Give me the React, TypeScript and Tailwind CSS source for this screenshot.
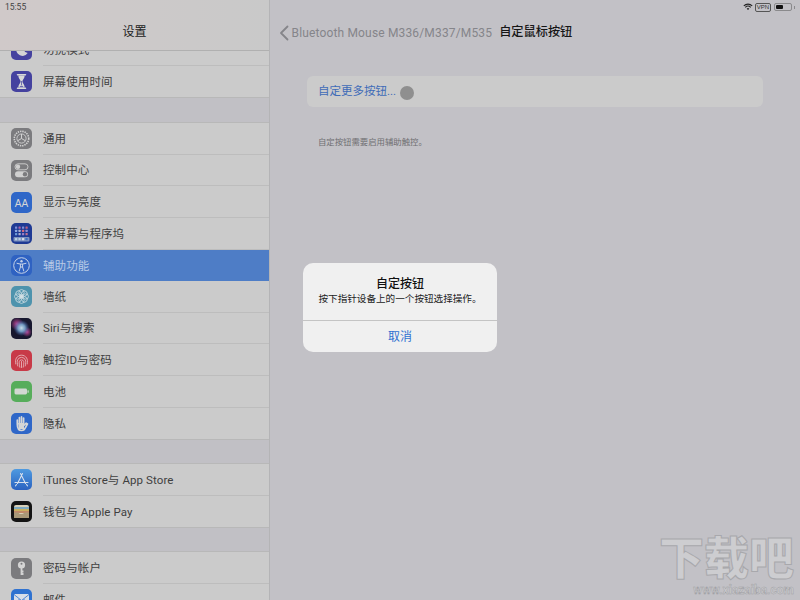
import type { ReactNode } from 'react'

const FONT = "font-['Roboto','Noto_Sans_CJK_SC',sans-serif]"

function Tile({ bg, children }: { bg: string; children: ReactNode }) {
  return (
    <div className={`w-[21px] h-[21px] rounded-[5px] shrink-0 overflow-hidden flex items-center justify-center ${bg}`}>
      {children}
    </div>
  )
}

function Svg({ children }: { children: ReactNode }) {
  return (
    <svg viewBox="0 0 21 21" width="21" height="21" fill="none">
      {children}
    </svg>
  )
}

const gridColors = ['#7f8fd8', '#b060a8', '#7f8fd8', '#c06080', '#8fa8e0', '#a8b0d0', '#d06a80', '#8f8fd0', '#6a9ad8', '#b0b0d0', '#9a80c8', '#c07090']

const icons: Record<string, ReactNode> = {
  moon: (
    <Tile bg="bg-[#45429f]">
      <Svg>
        <path d="M12.500 4.500a6.200 6.200 0 1 0 4.200 9.600 6.500 6.500 0 0 1-4.200-9.600z" fill="#d4d4d4" />
      </Svg>
    </Tile>
  ),
  hourglass: (
    <Tile bg="bg-[#45429f]">
      <Svg>
        <path d="M6.500 3.800h8M6.500 17.200h8" stroke="#d8d8d8" strokeWidth="1.500" strokeLinecap="round" />
        <path d="M7.300 4.500h6.400c0 3-2.300 4.400-2.300 6s2.300 3 2.300 6H7.300c0-3 2.300-4.400 2.300-6s-2.300-3-2.300-6z" fill="#d8d8d8" />
        <path d="M10.500 10v4" stroke="#45429f" strokeWidth="0.700" />
        <path d="M8.600 15.800c.6-1.300 3.200-1.300 3.800 0z" fill="#45429f" />
      </Svg>
    </Tile>
  ),
  gear: (
    <Tile bg="bg-[#7b7b7e]">
      <Svg>
        <circle cx="10.500" cy="10.500" r="7.200" stroke="#d2d2d2" strokeWidth="1.600" strokeDasharray="1.400 0.900" />
        <circle cx="10.500" cy="10.500" r="5.400" stroke="#7b7b7e" strokeWidth="0.600" />
        <circle cx="10.500" cy="10.500" r="4.600" stroke="#d2d2d2" strokeWidth="0.900" />
        <path d="M10.500 10.500V6M10.500 10.500l3.900 2.300M10.500 10.500l-3.900 2.300" stroke="#d2d2d2" strokeWidth="1" />
      </Svg>
    </Tile>
  ),
  toggles: (
    <Tile bg="bg-[#7b7b7e]">
      <Svg>
        <rect x="4" y="3.800" width="13" height="6" rx="3" stroke="#d0d0d0" strokeWidth="0.900" />
        <circle cx="7" cy="6.800" r="2.200" fill="#d0d0d0" />
        <rect x="4" y="11.300" width="13" height="6" rx="3" fill="#d0d0d0" />
        <circle cx="14" cy="14.300" r="2.200" fill="#7b7b7e" />
      </Svg>
    </Tile>
  ),
  display: (
    <Tile bg="bg-[#2f67c8]">
      <span className="text-[#d6d6d6] text-[10px] leading-none font-['Liberation_Sans',sans-serif] pt-[3px]">AA</span>
    </Tile>
  ),
  home: (
    <Tile bg="bg-[#1f3a94]">
      <Svg>
        {[0, 1, 2].map((row) =>
          [0, 1, 2, 3].map((col) => (
            <rect key={`${col}-${row}`} x={4 + col * 3.500} y={3.500 + row * 3.300} width="2.200" height="2.200" rx="0.500" fill={gridColors[col + row * 4]} />
          )),
        )}
        <rect x="2.500" y="14" width="16" height="4.500" rx="1" fill="#7f93c0" />
        {[0, 1, 2, 3].map((col) => (
          <rect key={col} x={4 + col * 3.500} y="15.100" width="2.200" height="2.200" rx="0.500" fill={col === 2 ? '#d8dfe8' : col === 3 ? '#3f6fc0' : '#b8d0e0'} />
        ))}
      </Svg>
    </Tile>
  ),
  access: (
    <Tile bg="bg-[#2f62c2]">
      <Svg>
        <circle cx="10.500" cy="10.500" r="7.800" stroke="#c8d4e8" strokeWidth="1" />
        <circle cx="10.500" cy="6.300" r="1.200" fill="#c8d4e8" />
        <path d="M6 8.300l3.400.8v3L8.200 16M15 8.300l-3.400.8v3l1.200 3.900M9.400 9.100h2.200M9.400 12h2.200" stroke="#c8d4e8" strokeWidth="1" strokeLinecap="round" strokeLinejoin="round" />
      </Svg>
    </Tile>
  ),
  flower: (
    <Tile bg="bg-[#4e93ad]">
      <Svg>
        {[0, 45, 90, 135, 180, 225, 270, 315].map((a) => (
          <circle key={a} cx="10.500" cy="6.300" r="2.700" stroke="#d2dfe4" strokeWidth="0.800" transform={`rotate(${a} 10.500 10.500)`} />
        ))}
        <circle cx="10.500" cy="10.500" r="1.800" fill="#d2dfe4" />
      </Svg>
    </Tile>
  ),
  siri: (
    <div className="w-[21px] h-[21px] rounded-[5px] shrink-0 overflow-hidden bg-[#17172e]">
      <svg viewBox="0 0 21 21" width="21" height="21">
        <defs>
          <radialGradient id="siriGlow" cx="50%" cy="50%" r="50%">
            <stop offset="0%" stopColor="#c8dce8" />
            <stop offset="45%" stopColor="#7aa8d0" stopOpacity="0.900" />
            <stop offset="100%" stopColor="#3a5aa8" stopOpacity="0" />
          </radialGradient>
          <radialGradient id="siriPink" cx="50%" cy="50%" r="50%">
            <stop offset="0%" stopColor="#c04898" />
            <stop offset="100%" stopColor="#c04898" stopOpacity="0" />
          </radialGradient>
        </defs>
        <circle cx="6" cy="6" r="6.500" fill="url(#siriPink)" />
        <circle cx="16" cy="14" r="5" fill="url(#siriPink)" />
        <circle cx="10.500" cy="10" r="8" fill="url(#siriGlow)" />
      </svg>
    </div>
  ),
  touch: (
    <Tile bg="bg-[#c83a48]">
      <Svg>
        <path
          d="M4.800 14c-.5-2.500-.3-4.500.6-6a6 6 0 0 1 10.200 0c.9 1.500 1.100 3.500.6 6M6.800 16c-.6-2.500-.8-4.500-.2-6a4.200 4.200 0 0 1 7.800 0c.6 1.500.4 3.500-.2 6M8.800 17.200c-.5-2.300-.8-4.200-.5-5.700a2.300 2.300 0 0 1 4.400 0c.3 1.500 0 3.400-.5 5.700M10.500 17.500V11.500"
          stroke="#e8c4c8"
          strokeWidth="0.800"
          strokeLinecap="round"
        />
      </Svg>
    </Tile>
  ),
  battery: (
    <Tile bg="bg-[#57ad5b]">
      <Svg>
        <rect x="3.500" y="7.500" width="12.500" height="6" rx="1.400" fill="#d2d8d2" />
        <rect x="16.500" y="9.300" width="1.200" height="2.400" rx="0.500" fill="#d2d8d2" />
      </Svg>
    </Tile>
  ),
  hand: (
    <Tile bg="bg-[#2f67c8]">
      <Svg>
        <path d="M6.300 11.500V7.200M8.400 10V4.700M10.500 10V3.800M12.600 10.500V5M6.300 11c0 4 1.500 6.500 4.300 6.500 2.200 0 3.200-1.200 3.900-3l2-3.600-1.300-.7-2.300 2.300" stroke="#d6d6d6" strokeWidth="1.700" strokeLinecap="round" strokeLinejoin="round" />
        <path d="M7 10h6v6H8z" fill="#d6d6d6" />
      </Svg>
    </Tile>
  ),
  appstore: (
    <div className="w-[21px] h-[21px] rounded-[5px] shrink-0 overflow-hidden bg-gradient-to-b from-[#4f9ae0] to-[#2b62c0]">
      <Svg>
        <path d="M11.500 4.500L6.500 14.500M9.500 4.500L14.500 14.500M4 13.500h13M5.500 15.500l-1 1.300M15.500 15.500l1 1.300" stroke="#d6dfec" strokeWidth="1.100" strokeLinecap="round" />
      </Svg>
    </div>
  ),
  wallet: (
    <Tile bg="bg-[#141414]">
      <Svg>
        <rect x="3" y="4" width="15" height="13" rx="2" fill="#d8d0b8" />
        <rect x="3" y="6" width="15" height="2" fill="#7faac0" />
        <rect x="3" y="8" width="15" height="2" fill="#c8b060" />
        <rect x="3" y="10" width="15" height="2" fill="#c08868" />
        <path d="M3 11.500h4.500c.6 2 4.400 2 6 0H18V17H3z" fill="#a89878" />
      </Svg>
    </Tile>
  ),
  key: (
    <Tile bg="bg-[#7b7b7e]">
      <Svg>
        <circle cx="10.500" cy="7" r="3.600" fill="#d4d4d4" />
        <circle cx="10.500" cy="5.800" r="1" fill="#7b7b7e" />
        <path d="M10.500 9v8M10.500 13.500h2M10.500 16h2" stroke="#d4d4d4" strokeWidth="1.800" />
      </Svg>
    </Tile>
  ),
  mail: (
    <Tile bg="bg-[#2f72d0]">
      <Svg>
        <rect x="3" y="5" width="15" height="11" rx="1" fill="#d8dee8" />
        <path d="M3 5.500l7.500 6 7.500-6M3 15.500l5.500-5.500M18 15.500L12.500 10" stroke="#2f72d0" strokeWidth="0.800" />
      </Svg>
    </Tile>
  ),
}

function Row({ icon, label, active, last }: { icon: string; label: string; active?: boolean; last?: boolean }) {
  return (
    <div className={`h-[31.6px] flex items-center pl-[11px] gap-[11px] ${active ? 'bg-[#4e7dc6]' : ''}`}>
      {icons[icon]}
      <div
        className={`flex-1 h-full flex items-center pt-[2px] text-[11.5px] tracking-[0.1px] ${active ? 'text-[#b9cbe6]' : 'text-[#3f3f3f]'} ${last || active ? '' : 'border-b border-[#bdbdbd]'}`}
      >
        {label}
      </div>
    </div>
  )
}

function Group({ children }: { children: ReactNode }) {
  return <div className="bg-[#cbcbcb] border-y border-[#b8b8b8]">{children}</div>
}

export default function App() {
  return (
    <div className={`relative w-[800px] h-[600px] overflow-hidden flex bg-[#c2c1c6] ${FONT}`}>
      {/* sidebar */}
      <div className="w-[270px] h-full shrink-0 overflow-hidden border-r border-[#b4b4b6] bg-[#c1c0c5]">
        <div className="relative z-10 h-[51px] border-b border-[#b0b0b0] bg-gradient-to-r from-[#d0c9c9] to-[#c9c9c9] flex flex-col">
          <div className="h-[14px] pl-[5px] flex items-center text-[8.5px] text-[#444]">15:55</div>
          <div className="flex-1 flex items-center justify-center text-[12px] text-[#222]">设置</div>
        </div>
        <div className="-mt-[18px] flex flex-col">
          <Group>
            <Row icon="moon" label="勿扰模式" />
            <Row icon="hourglass" label="屏幕使用时间" last />
          </Group>
          <div className="h-[24px] shrink-0" />
          <Group>
            <Row icon="gear" label="通用" />
            <Row icon="toggles" label="控制中心" />
            <Row icon="display" label="显示与亮度" />
            <Row icon="home" label="主屏幕与程序坞" />
            <Row icon="access" label="辅助功能" active />
            <Row icon="flower" label="墙纸" />
            <Row icon="siri" label="Siri与搜索" />
            <Row icon="touch" label="触控ID与密码" />
            <Row icon="battery" label="电池" />
            <Row icon="hand" label="隐私" last />
          </Group>
          <div className="h-[23px] shrink-0" />
          <Group>
            <Row icon="appstore" label="iTunes Store与 App Store" />
            <Row icon="wallet" label="钱包与 Apple Pay" last />
          </Group>
          <div className="h-[23px] shrink-0" />
          <Group>
            <Row icon="key" label="密码与帐户" />
            <Row icon="mail" label="邮件" last />
          </Group>
        </div>
      </div>

      {/* detail */}
      <div className="flex-1 flex flex-col">
        <div className="h-[14px] flex items-center justify-end gap-[2px] pr-[5px]">
          <svg viewBox="0 0 10 8" width="10" height="8" fill="none">
            <path d="M.8 2.800a6 6 0 0 1 8.400 0M2.300 4.300a3.900 3.900 0 0 1 5.400 0" stroke="#222" strokeWidth="1.100" />
            <path d="M3.700 5.700a1.900 1.900 0 0 1 2.600 0L5 7z" fill="#222" />
          </svg>
          <span className="border border-[#555] rounded-[2px] px-[1px] text-[6px] leading-[7px] text-[#333] font-['Liberation_Sans',sans-serif]">VPN</span>
          <div className="ml-[1px] w-[18px] h-[8px] border border-[#8a8a8c] rounded-[2px] p-[1px] flex">
            <div className="w-[7px] bg-[#111] rounded-[1px]" />
          </div>
          <div className="w-[1px] h-[3px] bg-[#8a8a8c]" />
        </div>
        <div className="h-[37px] flex items-center pl-[9px]">
          <svg viewBox="0 0 10 16" width="10" height="16" fill="none">
            <path d="M8.500 1.500L2 8l6.500 6.500" stroke="#85858a" strokeWidth="1.800" strokeLinecap="round" strokeLinejoin="round" />
          </svg>
          <span className="ml-[2.5px] text-[12px] text-[#85858a] tracking-[0.16px]">Bluetooth Mouse M336/M337/M535</span>
          <span className="ml-[7px] text-[12.2px] font-medium text-[#161616]">自定鼠标按钮</span>
        </div>
        <div className="px-[37px] pt-[25px]">
          <div className="h-[31px] rounded-[6px] bg-[#cbcbcb] flex items-center px-[11px] text-[11.5px] text-[#3f6cb8]">
            <span>自定更多按钮...</span>
            <span className="ml-[4px] mt-[2px] w-[14px] h-[14px] rounded-full bg-[#8f8f8f]" />
          </div>
          <p className="mt-[29px] ml-[11px] text-[8.4px] leading-[12px] text-[#6f6f72]">自定按钮需要启用辅助触控。</p>
        </div>
      </div>

      {/* alert */}
      <div className="absolute z-20 left-[303px] top-[263px] w-[194px] h-[89px] rounded-[10px] bg-[#f0f0f0] flex flex-col">
        <div className="h-[58px] flex flex-col items-center pt-[13px] border-b border-[#c4c4c4]">
          <div className="text-[12px] leading-[16px] font-medium text-[#111]">自定按钮</div>
          <div className="text-[9.6px] leading-[14px] text-[#222]">按下指针设备上的一个按钮选择操作。</div>
        </div>
        <div className="flex-1 flex items-center justify-center text-[12px] text-[#2f72d0]">取消</div>
      </div>

      {/* watermark */}
      <div className="absolute z-20 left-[659px] top-[535px] w-[135px] flex flex-col items-end select-none">
        <div className="text-[45px] leading-[49px] font-black whitespace-nowrap text-[#cdcdd0] [-webkit-text-stroke:1px_#a8a8ac]">下载吧</div>
        <div className="text-[12px] leading-[12px] font-bold text-[#c9c9cc] [-webkit-text-stroke:0.4px_#9c9ca1]">www.xiazaiba.com</div>
      </div>
    </div>
  )
}
